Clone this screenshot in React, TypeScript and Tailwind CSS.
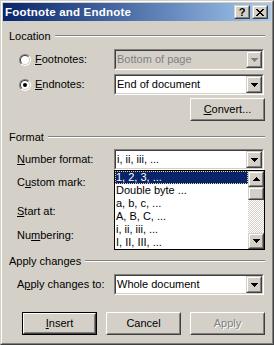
import React from "react";

function U({ c }: { c: string }) {
  return <span className="underline underline-offset-[1px] decoration-1">{c}</span>;
}

function Arrow({ up, color = "#000" }: { up?: boolean; color?: string }) {
  return (
    <svg width="7" height="4" viewBox="0 0 7 4" shapeRendering="crispEdges">
      {up ? (
        <path d="M3 0h1v1h1v1h1v1h1v1H0V3h1V2h1V1h1z" fill={color} />
      ) : (
        <path d="M0 0h7v1H6v1H5v1H4v1H3V3H2V2H1V1H0z" fill={color} />
      )}
    </svg>
  );
}

function Raised({ className = "", children }: { className?: string; children?: React.ReactNode }) {
  return (
    <div className={`border border-t-[#d4d0c8] border-l-[#d4d0c8] border-b-[#404040] border-r-[#404040] bg-[#d4d0c8] ${className}`}>
      <div className="h-full w-full border border-t-white border-l-white border-b-[#808080] border-r-[#808080] flex items-center justify-center">
        {children}
      </div>
    </div>
  );
}

function Combo({ text, disabled }: { text: string; disabled?: boolean }) {
  return (
    <div className="w-[150px] h-[21px] border border-t-[#808080] border-l-[#808080] border-b-white border-r-white">
      <div
        className={`h-full flex border border-t-[#404040] border-l-[#404040] border-b-[#d4d0c8] border-r-[#d4d0c8] ${
          disabled ? "bg-[#d4d0c8]" : "bg-white"
        }`}
      >
        <div className={`flex-1 pl-[1px] flex items-center ${disabled ? "text-[#808080]" : "text-black"}`}>{text}</div>
        <Raised className="w-[16px] h-full">
          <Arrow color={disabled ? "#808080" : "#000"} />
        </Raised>
      </div>
    </div>
  );
}

function Radio({ checked }: { checked?: boolean }) {
  return (
    <div className="w-[12px] h-[12px] rounded-full border border-t-[#808080] border-l-[#808080] border-b-white border-r-white">
      <div className="w-full h-full rounded-full border border-t-[#404040] border-l-[#404040] border-b-[#d4d0c8] border-r-[#d4d0c8] bg-white flex items-center justify-center">
        {checked && <div className="w-[4px] h-[4px] rounded-full bg-black" />}
      </div>
    </div>
  );
}

function Btn({ children, def, disabled }: { children: React.ReactNode; def?: boolean; disabled?: boolean }) {
  const inner = (
    <div className="h-full border border-t-white border-l-white border-b-[#404040] border-r-[#404040]">
      <div className="h-full border border-t-[#d4d0c8] border-l-[#d4d0c8] border-b-[#808080] border-r-[#808080] flex items-center justify-center">
        {disabled ? (
          <span className="text-[#808080] [text-shadow:1px_1px_0_#fff]">{children}</span>
        ) : (
          <span>{children}</span>
        )}
      </div>
    </div>
  );
  return def ? (
    <div className="w-[75px] h-[23px] border border-black">{inner}</div>
  ) : (
    <div className="w-[75px] h-[23px]">{inner}</div>
  );
}

function Header({ label }: { label: string }) {
  return (
    <div className="h-[13px] flex items-start">
      <span className="whitespace-nowrap">{label}</span>
      <div className="flex-1 ml-[4px] mt-[5px] h-[2px] border-t border-t-[#808080] border-b border-b-white" />
    </div>
  );
}

export default function App() {
  const items = ["1, 2, 3, ...", "Double byte ...", "a, b, c, ...", "A, B, C, ...", "i, ii, iii, ...", "I, II, III, ..."];
  return (
    <div className="w-[274px] h-[345px] bg-[#d4d0c8] border border-t-[#d4d0c8] border-l-[#d4d0c8] border-b-[#404040] border-r-[#404040] font-['Liberation_Sans',Arial,sans-serif] text-[11px] leading-[13px] text-black">
      <div className="h-full border border-t-white border-l-white border-b-[#808080] border-r-[#808080] p-[1px] flex flex-col">
        {/* Title bar */}
        <div className="h-[18px] flex items-center bg-linear-to-r from-[#0a246a] to-[#a6caf0] pl-[2px] pr-[3px]">
          <span className="flex-1 text-white font-bold text-[11.5px] tracking-[0.2px]">Footnote and Endnote</span>
          <Raised className="w-[16px] h-[14px]">
            <span className="font-bold text-[11px] leading-[10px] -mt-[1px]">?</span>
          </Raised>
          <Raised className="w-[16px] h-[14px] ml-[2px]">
            <svg width="8" height="7" viewBox="0 0 8 7" shapeRendering="crispEdges">
              <path
                d="M0 0h2v1h1v1h2V1h1V0h2v1H7v1H6v1H5v1h1v1h1v1h1v1H6V6H5V5H3v1H2v1H0V6h1V5h1V4h1V3H2V2H1V1H0z"
                fill="#000"
              />
            </svg>
          </Raised>
        </div>

        {/* Content */}
        <div className="flex flex-col pl-[6px] pr-[6px]">
          <div className="mt-[9px]">
            <Header label="Location" />
          </div>
          <div className="mt-[6px] h-[21px] flex items-center pl-[10px]">
            <Radio />
            <span className="ml-[4px] w-[79px]">
              <U c="F" />ootnotes:
            </span>
            <Combo text="Bottom of page" disabled />
          </div>
          <div className="mt-[4px] h-[21px] flex items-center pl-[10px]">
            <Radio checked />
            <span className="ml-[4px] w-[79px]">
              <U c="E" />ndnotes:
            </span>
            <Combo text="End of document" />
          </div>
          <div className="mt-[3px] flex justify-end">
            <Btn>
              <U c="C" />onvert...
            </Btn>
          </div>

          <div className="mt-[10px]">
            <Header label="Format" />
          </div>
          <div className="mt-[5px] h-[21px] flex items-center pl-[8px]">
            <span className="w-[97px]">
              <U c="N" />umber format:
            </span>
            <div className="relative">
              <Combo text="i, ii, iii, ..." />
              <div className="absolute top-full left-0 w-[151px] h-[80px] border border-black bg-white flex z-10">
                <div className="flex-1 flex flex-col">
                  {items.map((t, i) =>
                    i === 0 ? (
                      <div
                        key={t}
                        className="h-[13px] bg-[#0a246a] text-white pl-[1px] outline-1 outline-dotted outline-[#e8d890] -outline-offset-1 whitespace-nowrap"
                      >
                        {t}
                      </div>
                    ) : (
                      <div key={t} className="h-[13px] pl-[1px] whitespace-nowrap">
                        {t}
                      </div>
                    )
                  )}
                </div>
                <div className="w-[16px] flex flex-col">
                  <Raised className="w-[16px] h-[16px]">
                    <Arrow up />
                  </Raised>
                  <Raised className="w-[16px] h-[13px]" />
                  <div className="flex-1 bg-[repeating-conic-gradient(#d4d0c8_0_25%,#fff_0_50%)] bg-[length:2px_2px]" />
                  <Raised className="w-[16px] h-[16px]">
                    <Arrow />
                  </Raised>
                </div>
              </div>
            </div>
          </div>
          <div className="mt-[1px] h-[22px] flex items-center pl-[8px]">
            <span>
              C<U c="u" />stom mark:
            </span>
          </div>
          <div className="mt-[7px] h-[22px] flex items-center pl-[8px]">
            <span>
              <U c="S" />tart at:
            </span>
          </div>
          <div className="mt-[2px] h-[22px] flex items-center pl-[8px]">
            <span>
              Nu<U c="m" />bering:
            </span>
          </div>

          <div className="mt-[9px]">
            <Header label="Apply changes" />
          </div>
          <div className="mt-[6px] h-[21px] flex items-center pl-[8px]">
            <span className="w-[97px]">
              A<U c="p" />ply changes to:
            </span>
            <Combo text="Whole document" />
          </div>

          <div className="mt-[17px] flex justify-end gap-[9px]">
            <Btn def>
              <U c="I" />nsert
            </Btn>
            <Btn>Cancel</Btn>
            <Btn disabled>Apply</Btn>
          </div>
        </div>
      </div>
    </div>
  );
}
